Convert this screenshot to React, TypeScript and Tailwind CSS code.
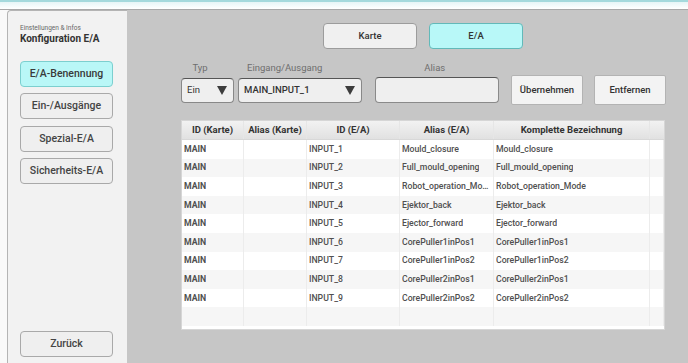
import React from "react";

const rows = [
  ["MAIN", "", "INPUT_1", "Mould_closure", "Mould_closure"],
  ["MAIN", "", "INPUT_2", "Full_mould_opening", "Full_mould_opening"],
  ["MAIN", "", "INPUT_3", "Robot_operation_Mode", "Robot_operation_Mode"],
  ["MAIN", "", "INPUT_4", "Ejektor_back", "Ejektor_back"],
  ["MAIN", "", "INPUT_5", "Ejector_forward", "Ejector_forward"],
  ["MAIN", "", "INPUT_6", "CorePuller1inPos1", "CorePuller1inPos1"],
  ["MAIN", "", "INPUT_7", "CorePuller1inPos2", "CorePuller1inPos2"],
  ["MAIN", "", "INPUT_8", "CorePuller2inPos1", "CorePuller2inPos1"],
  ["MAIN", "", "INPUT_9", "CorePuller2inPos2", "CorePuller2inPos2"],
  ["", "", "", "", ""],
];

const cols = ["w-[62px]", "w-[63px]", "w-[93px]", "w-[94px]", "w-[156px]", "flex-1"];
const headers = ["ID (Karte)", "Alias (Karte)", "ID (E/A)", "Alias (E/A)", "Komplette Bezeichnung", ""];

function SideButton({ label, active }: { label: string; active?: boolean }) {
  return (
    <div
      className={
        "w-[93px] h-[26px] rounded-[4px] border flex items-center justify-center text-[10.5px] font-medium " +
        (active
          ? "bg-[#b9f7f7] border-[#7ccfcf] text-[#3a3a3a]"
          : "bg-[#efefef] border-[#a9a9a9] text-[#444]")
      }
    >
      {label}
    </div>
  );
}

function Arrow() {
  return (
    <svg width="10" height="9" viewBox="0 0 10 9">
      <path d="M0 0 L10 0 L5 9 Z" fill="#3c3c3c" />
    </svg>
  );
}

export default function App() {
  return (
    <div
      className="w-[688px] h-[363px] flex flex-col overflow-hidden bg-white"
      style={{ fontFamily: "Roboto, 'Liberation Sans', sans-serif" }}
    >
      <div className="h-[2px] bg-[#a4d9dc]" />
      <div className="h-[8px] bg-gradient-to-b from-[#e6f5f6] to-white border-b border-[#a8a8a8]" />
      <div className="flex flex-1 bg-[#f9f9f9]">
        <div className="w-[7px]" />
        <div className="w-[120px] bg-[#f2f2f2] border-l border-t border-[#b4b4b4] rounded-tl-[4px] flex flex-col pl-[12px]">
          <div className="mt-[14px] text-[6.5px] text-[#666] leading-none">Einstellungen &amp; Infos</div>
          <div className="mt-[2px] text-[10px] font-bold text-[#333] leading-none">Konfiguration E/A</div>
          <div className="mt-[17px] flex flex-col gap-[6.5px]">
            <SideButton label="E/A-Benennung" active />
            <SideButton label="Ein-/Ausgänge" />
            <SideButton label="Spezial-E/A" />
            <SideButton label="Sicherheits-E/A" />
          </div>
          <div className="mt-auto mb-[6px]">
            <SideButton label="Zurück" />
          </div>
        </div>
        <div className="flex-1 bg-[#c6c6c6] pl-[54px] pt-[13px] flex flex-col">
          <div className="ml-[142px] flex gap-[12px]">
            <div className="w-[94px] h-[26px] rounded-[4px] border border-[#9c9c9c] bg-[#f0f0f0] flex items-center justify-center text-[9.5px] font-medium text-[#333]">
              Karte
            </div>
            <div className="w-[94px] h-[26px] rounded-[4px] border border-[#62b9b9] bg-[#b8f8f8] flex items-center justify-center text-[9.5px] font-medium text-[#333]">
              E/A
            </div>
          </div>
          <div className="mt-[14px] flex h-[12px] items-start text-[9.5px] text-[#6e6e6e] leading-none">
            <div className="w-[38px] text-center">Typ</div>
            <div className="ml-[28px]">Eingang/Ausgang</div>
            <div className="ml-[102px]">Alias</div>
          </div>
          <div className="flex h-[30px] items-center">
            <div className="w-[53px] h-[25px] rounded-[4px] border border-[#888] border-t-[#555] bg-[#efefef] flex items-center justify-between pl-[5px] pr-[6px] text-[9.5px] text-[#333]">
              <span>Ein</span>
              <Arrow />
            </div>
            <div className="ml-[4px] w-[124px] h-[25px] rounded-[4px] border border-[#888] border-t-[#555] bg-[#efefef] flex items-center justify-between pl-[5px] pr-[6px] text-[9.5px] text-[#333] font-medium">
              <span>MAIN_INPUT_1</span>
              <Arrow />
            </div>
            <div className="ml-[13px] w-[124px] h-[26px] rounded-[4px] border border-[#8a8a8a] border-t-[#555] bg-[#efefef]" />
            <div className="ml-[12px] w-[72px] h-[30px] rounded-[2px] border border-[#b3b3b3] bg-[#f3f3f3] flex items-center justify-center text-[9.5px] font-medium text-[#333]">
              Übernehmen
            </div>
            <div className="ml-[11px] w-[72px] h-[30px] rounded-[2px] border border-[#b3b3b3] bg-[#f3f3f3] flex items-center justify-center text-[9.5px] font-medium text-[#333]">
              Entfernen
            </div>
          </div>
          <div className="mt-[15px] w-[484px] h-[210px] bg-white border border-[#d6d6d6] flex flex-col">
            <div className="h-[19px] flex bg-gradient-to-b from-[#f2f2f2] to-[#e1e1e1] border-b border-[#d8d8d8]">
              {headers.map((h, i) => (
                <div
                  key={i}
                  className={cols[i] + " flex items-center justify-center text-[9.5px] font-bold text-[#333] border-r border-[#e6e6e6] last:border-r-0"}
                >
                  {h}
                </div>
              ))}
            </div>
            {rows.map((r, ri) => (
              <div
                key={ri}
                className={"h-[18.6px] flex " + (ri % 2 === 1 ? "bg-[#f6f6f6]" : "bg-white")}
              >
                {[...r, ""].map((c, ci) => (
                  <div
                    key={ci}
                    className={
                      cols[ci] +
                      " flex items-center pl-[2px] pr-[3px] text-[8.7px] text-[#505050] border-r border-[#ececec] overflow-hidden whitespace-nowrap " +
                      (ci === 0 ? "font-bold" : "font-medium")
                    }
                  >
                    <span className="truncate">{c}</span>
                  </div>
                ))}
              </div>
            ))}
          </div>
        </div>
      </div>
    </div>
  );
}
